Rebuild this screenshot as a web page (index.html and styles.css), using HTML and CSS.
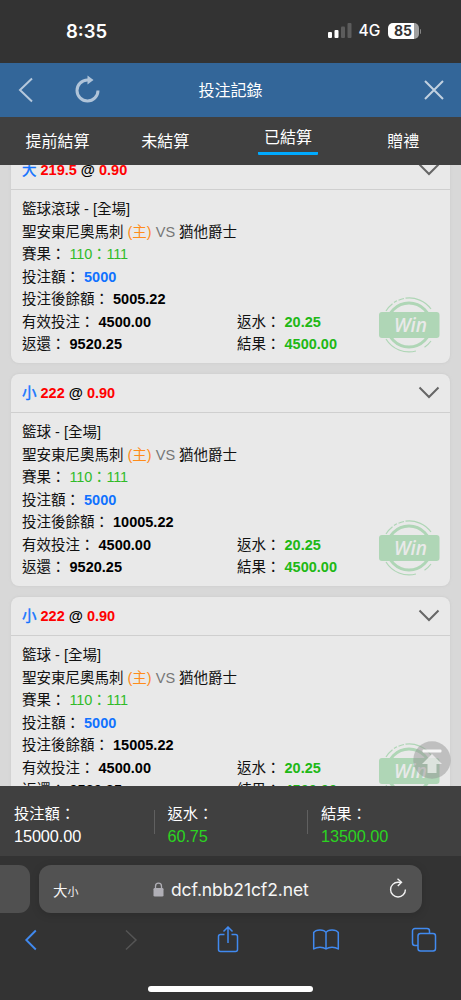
FILE: index.html
```html
<!DOCTYPE html>
<html lang="zh-Hant">
<head>
<meta charset="utf-8">
<title>投注記錄</title>
<link rel="stylesheet" href="styles.css">
</head>
<body>
<svg class="defs" width="0" height="0">
  <symbol id="win" viewBox="0 0 62 56">
    <g fill="none" stroke="#afd6b6">
      <circle cx="31" cy="28" r="22" stroke-width="3"/>
      <path d="M20.500 3.200A27 27 0 0 1 26 1.500M27.500 1.200A27 27 0 0 1 53 12M53 44A27 27 0 0 1 46.500 50.300M38 54A27 27 0 0 1 8 42M8 14A27 27 0 0 1 14.500 6.700M16 5.600A27 27 0 0 1 19 3.800" stroke-width="1.200"/>
    </g>
    <rect x="1" y="15" width="60.500" height="26" rx="3" fill="#afd6b6"/>
    <text x="32.500" y="35" class="win-text">Win</text>
  </symbol>
  <symbol id="down" viewBox="0 0 22 14"><path d="M1.500 1.500L11 11L20.500 1.500" fill="none" stroke="#666" stroke-width="2"/></symbol>
</svg>
<div class="phone">
  <div class="status">
    <span class="clock">8:35</span>
    <div class="status-right">
      <svg width="24" height="16" viewBox="0 0 24 16"><rect y="9" width="4" height="6" rx="1" fill="#fff"/><rect x="6.500" y="7" width="4" height="8" rx="1" fill="#fff"/><rect x="13" y="3.500" width="4" height="11.500" rx="1" fill="#5c5c5c"/><rect x="19.500" y="0" width="4" height="15" rx="1" fill="#5c5c5c"/></svg>
      <span class="network">4G</span>
      <span class="battery">85</span><i class="battery-tip"></i>
    </div>
  </div>
  <header class="titlebar">
    <svg class="back" width="16" height="26" viewBox="0 0 16 26"><path d="M14 1.500L2 13L14 24.500" fill="none" stroke="#b5c8dc" stroke-width="2"/></svg>
    <svg class="refresh" width="26" height="28" viewBox="0 0 26 28"><path d="M23 15.500A10.500 10.500 0 1 1 12.500 5H14" fill="none" stroke="#b0c4d9" stroke-width="3"/><path d="M12.500 .500L18.500 5L12.500 9.500Z" fill="#b0c4d9"/></svg>
    <h1>投注記錄</h1>
    <svg class="close" width="20" height="20" viewBox="0 0 20 20"><path d="M1 1L19 19M19 1L1 19" stroke="#c2d1e0" stroke-width="2"/></svg>
  </header>
  <nav class="tabs">
    <span class="tab">提前結算</span>
    <span class="tab pending">未結算</span>
    <span class="tab active"><b>已結算</b></span>
    <span class="tab">贈禮</span>
  </nav>
  <main class="list">
    <section class="card">
      <div class="card-head"><p><span class="blue pick">大</span> <b class="red">219.5</b> <b>@</b> <b class="red">0.90</b></p><svg width="22" height="14"><use href="#down"/></svg></div>
      <div class="card-body">
        <p>籃球滾球 - [全場]</p>
        <p>聖安東尼奧馬刺 <span class="orange">(主)</span> <span class="gray">VS</span> 猶他爵士</p>
        <p>賽果： <span class="score">110<i>：</i>111</span></p>
        <p>投注額： <b class="blue">5000</b></p>
        <p>投注後餘額： <b>5005.22</b></p>
        <div class="pair"><p>有效投注： <b>4500.00</b></p><p>返水： <b class="green">20.25</b></p></div>
        <div class="pair"><p>返還： <b>9520.25</b></p><p>結果： <b class="green">4500.00</b></p></div>
        <svg class="win" width="62" height="56"><use href="#win"/></svg>
      </div>
    </section>
    <section class="card">
      <div class="card-head"><p><span class="blue pick">小</span> <b class="red">222</b> <b>@</b> <b class="red">0.90</b></p><svg width="22" height="14"><use href="#down"/></svg></div>
      <div class="card-body">
        <p>籃球 - [全場]</p>
        <p>聖安東尼奧馬刺 <span class="orange">(主)</span> <span class="gray">VS</span> 猶他爵士</p>
        <p>賽果： <span class="score">110<i>：</i>111</span></p>
        <p>投注額： <b class="blue">5000</b></p>
        <p>投注後餘額： <b>10005.22</b></p>
        <div class="pair"><p>有效投注： <b>4500.00</b></p><p>返水： <b class="green">20.25</b></p></div>
        <div class="pair"><p>返還： <b>9520.25</b></p><p>結果： <b class="green">4500.00</b></p></div>
        <svg class="win" width="62" height="56"><use href="#win"/></svg>
      </div>
    </section>
    <section class="card">
      <div class="card-head"><p><span class="blue pick">小</span> <b class="red">222</b> <b>@</b> <b class="red">0.90</b></p><svg width="22" height="14"><use href="#down"/></svg></div>
      <div class="card-body">
        <p>籃球 - [全場]</p>
        <p>聖安東尼奧馬刺 <span class="orange">(主)</span> <span class="gray">VS</span> 猶他爵士</p>
        <p>賽果： <span class="score">110<i>：</i>111</span></p>
        <p>投注額： <b class="blue">5000</b></p>
        <p>投注後餘額： <b>15005.22</b></p>
        <div class="pair"><p>有效投注： <b>4500.00</b></p><p>返水： <b class="green">20.25</b></p></div>
        <div class="pair"><p>返還： <b>9520.25</b></p><p>結果： <b class="green">4500.00</b></p></div>
        <svg class="win" width="62" height="56"><use href="#win"/></svg>
      </div>
    </section>
    <svg class="to-top" width="38" height="38" viewBox="0 0 38 38"><circle cx="19" cy="19" r="18.700" fill="#969696" fill-opacity=".5"/><g fill="#fff" fill-opacity=".62"><rect x="9.500" y="8.500" width="19" height="3" rx="1" fill-opacity=".85"/><path d="M19 13L29 23H23.500V32H14.500V23H9Z"/></g></svg>
  </main>
  <section class="summary">
    <div><p>投注額：</p><p>15000.00</p></div>
    <div><p>返水：</p><p class="lime">60.75</p></div>
    <div><p>結果：</p><p class="lime">13500.00</p></div>
  </section>
  <footer class="browser">
    <div class="address-row">
      <div class="previous-page"></div>
      <div class="address">
        <span class="text-size">大<small>小</small></span>
        <span class="url"><svg width="11" height="15" viewBox="0 0 11 15"><rect x=".500" y="6" width="10" height="8.500" rx="1.300" fill="#b0afb6"/><path d="M2.500 7V4.200A3 3 0 0 1 8.500 4.200V7" fill="none" stroke="#b0afb6" stroke-width="1.300"/></svg>dcf.nbb21cf2.net</span>
        <svg class="reload" width="18" height="20" viewBox="0 0 18 20"><path d="M16.400 11.500A7.400 7.400 0 1 1 9 4.200H12" fill="none" stroke="#f2f2f2" stroke-width="1.400"/><path d="M8.500 .800L12.500 4.300L8.800 8" fill="none" stroke="#f2f2f2" stroke-width="1.400"/></svg>
      </div>
    </div>
    <div class="tools">
      <svg width="28" height="28" viewBox="0 0 28 28"><path d="M18.800 4.500L9.300 14L18.800 23.500" fill="none" stroke="#418af0" stroke-width="1.900"/></svg>
      <svg width="28" height="28" viewBox="0 0 28 28"><path d="M11 4.500L21 14L11 23.500" fill="none" stroke="#555" stroke-width="1.500"/></svg>
      <svg width="28" height="28" viewBox="0 0 28 28"><path d="M10.500 8.500H6.500A2 2 0 0 0 4.500 10.500V23.500A2 2 0 0 0 6.500 25.500H21.500A2 2 0 0 0 23.500 23.500V10.500A2 2 0 0 0 21.500 8.500H17.500M14 17V1.500M9.500 5.500L14 1L18.500 5.500" fill="none" stroke="#418af0" stroke-width="1.500"/></svg>
      <svg width="28" height="28" viewBox="0 0 28 28"><path d="M14 6.500C12 3 4 3 1.700 6.500V23C5 20.500 11 20.500 14 23C17 20.500 23 20.500 26.300 23V6.500C24 3 16 3 14 6.500ZM14 6.500V23" fill="none" stroke="#418af0" stroke-width="1.500" stroke-linejoin="round"/></svg>
      <svg width="28" height="28" viewBox="0 0 28 28"><path d="M8 19.500H5A2.500 2.500 0 0 1 2.500 17V5A2.500 2.500 0 0 1 5 2.500H17A2.500 2.500 0 0 1 19.500 5V7.500" fill="none" stroke="#418af0" stroke-width="1.500"/><rect x="8" y="7.500" width="17.500" height="17.500" rx="2.500" fill="none" stroke="#418af0" stroke-width="1.500"/></svg>
    </div>
    <div class="home-indicator"></div>
  </footer>
</div>
</body>
</html>
```
FILE: styles.css
```css
* { box-sizing: border-box; }
body { margin: 0; background: #333; font-family: "Liberation Sans", "Noto Sans CJK TC", sans-serif; }
p, h1 { margin: 0; }
svg { display: block; flex: none; }
.defs { position: absolute; }
.phone { width: 461px; height: 1000px; overflow: hidden; display: flex; flex-direction: column; }
.status { height: 63px; flex: none; display: flex; justify-content: space-between; padding: 19px 40px 0 66px; color: #fff; }
.clock { font: 600 18.5px/25px Inter, sans-serif; letter-spacing: 0; }
.status-right { display: flex; align-items: center; height: 24px; }
.network { font: 500 15.5px/24px Inter, sans-serif; margin-left: 7px; width: 29px; }
.battery { width: 31px; height: 16px; border-radius: 5px; background: linear-gradient(90deg, #fff 26px, #a0a0a0 26px); color: #333; font: 700 14px/16px Inter, sans-serif; text-align: center; }
.battery-tip { width: 1.500px; height: 5px; background: #858585; margin-left: 1px; border-radius: 0 2px 2px 0; }
.titlebar { height: 54px; flex: none; background: #336699; display: grid; grid-template-columns: 75px 75px 1fr 150px; align-items: center; color: #fff; }
.back { margin-left: 18px; }
.refresh { margin-top: -3px; }
.titlebar h1 { font-size: 16px; font-weight: 400; line-height: 24px; text-align: center; padding-top: 1px; }
.close { justify-self: end; margin-right: 17px; }
.tabs { height: 48px; flex: none; background: #404040; display: grid; grid-template-columns: repeat(4, 1fr); color: #fff; font-size: 16px; line-height: 24px; text-align: center; position: relative; z-index: 2; }
.tab { padding-top: 13px; }
.tab.pending { padding-right: 15px; }
.tab.active { padding-top: 9px; }
.active b { display: inline-block; width: 60px; height: 29px; font-weight: 400; border-bottom: 3px solid #00aaff; border-radius: 1px; }
.list { height: 621px; flex: none; overflow: hidden; background: #d8d8d8; padding: 0 11px; display: flex; flex-direction: column; gap: 11px; position: relative; }
.card { height: 212px; flex: none; border-radius: 8px; background: #e9e9e9; box-shadow: 0 0 3px #c8c8c8; font-size: 14.5px; color: #111; }
.card:first-child { margin-top: -14px; }
.card p { line-height: 22.5px; white-space: nowrap; }
.card-head { height: 39px; border-bottom: 1.500px solid #cfcfcf; padding: 0 10px 0 11px; display: flex; align-items: center; justify-content: space-between; }
.card b { color: #000; }
.card-body { padding: 8.400px 11px 0; position: relative; height: 173px; }
.card .blue { color: #1272ff; }
.card .red { color: #ff0000; }
.card .green { color: #20b815; }
.pick { -webkit-text-stroke: .4px #1272ff; }
.orange { color: #ff8c1a; }
.gray { color: #777; }
.score { color: #30bb28; letter-spacing: -.2px; }
.score i { font-style: normal; }
.pair { display: grid; grid-template-columns: 215px 1fr; }
.win { position: absolute; right: 10px; bottom: 10.500px; }
.win-text { font: italic 600 19px "Open Sans", sans-serif; fill: #e9e9e9; text-anchor: middle; }
.to-top { position: absolute; right: 10.500px; bottom: 7px; }
.summary { height: 70px; flex: none; background: #404040; color: #fff; font-size: 15.3px; line-height: 22px; padding: 17px 0 0; display: grid; grid-template-columns: 153.500px 153.500px 1fr; }
.summary div { padding-left: 14px; position: relative; }
.summary p { white-space: nowrap; }
.summary p:last-child { font-size: 16.300px; letter-spacing: -.1px; }
.summary div + div::before { content: ""; position: absolute; left: 0; top: 7px; width: 1px; height: 24px; background: #606060; }
.lime { color: #2bd420; }
.browser { flex: 1; background: #333; padding-top: 9px; display: flex; flex-direction: column; }
.address-row { display: flex; gap: 9px; height: 48px; }
.previous-page { width: 30px; background: #505050; border-radius: 0 11px 11px 0; }
.address { width: 383px; background: #525252; border-radius: 12px; box-shadow: 0 2px 8px rgba(0,0,0,.15); color: #f5f5f5; display: grid; grid-template-columns: 100px 1fr 101px; align-items: center; padding: 0 14px; }
.text-size { font: 400 14.5px "Noto Sans CJK TC", sans-serif; }
.text-size small { font-size: 11px; }
.url { display: flex; align-items: center; gap: 7px; font: 400 17.5px Inter, sans-serif; letter-spacing: -.1px; white-space: nowrap; }
.reload { justify-self: end; margin: -2px 0 0; transform: translateX(-3px); }
.tools { height: 54px; display: flex; justify-content: space-between; align-items: center; padding: 0 23px 0 17px; }
.home-indicator { width: 165px; height: 5.500px; border-radius: 3px; background: #fff; margin: 19px auto 0; }
```
